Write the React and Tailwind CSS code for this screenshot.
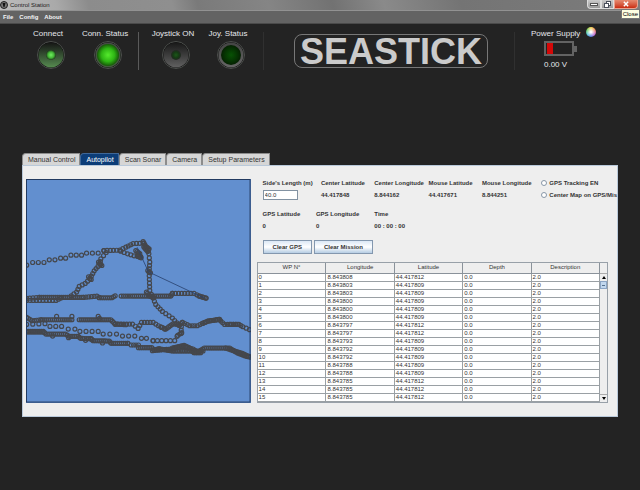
import React, { useState } from 'react';

const MENU = ['File', 'Config', 'About'];
const TABS = ['Manual Control', 'Autopilot', 'Scan Sonar', 'Camera', 'Setup Parameters'];
const COLUMNS = ['WP N°', 'Longitude', 'Latitude', 'Depth', 'Description'];

const WAYPOINTS = [
  ['8.843808', '44.417812'],
  ['8.843803', '44.417809'],
  ['8.843803', '44.417809'],
  ['8.843800', '44.417809'],
  ['8.843800', '44.417809'],
  ['8.843800', '44.417809'],
  ['8.843797', '44.417812'],
  ['8.843797', '44.417812'],
  ['8.843793', '44.417809'],
  ['8.843792', '44.417809'],
  ['8.843792', '44.417809'],
  ['8.843788', '44.417809'],
  ['8.843788', '44.417809'],
  ['8.843785', '44.417812'],
  ['8.843785', '44.417812'],
  ['8.843785', '44.417812'],
];

// step = distance between two fixes along the track
const TRACKS = [
  { step: 17, points: [[2, 259], [20, 251], [54, 251], [70, 243], [87, 243], [104, 238], [119, 238], [135, 229], [167, 229], [182, 223], [217, 223], [234, 215]] },
  { step: 9, points: [[234, 215], [282, 214], [300, 205], [322, 194], [352, 193], [368, 212]] },
  { step: 9, points: [[285, 217], [305, 225], [325, 231], [345, 233]] },
  { step: 5, points: [[352, 188], [360, 203], [370, 210], [366, 218], [354, 204]] },
  { step: 5, points: [[330, 215], [342, 224], [334, 231], [346, 237], [340, 230]] },
  { step: 10, points: [[241, 221], [225, 240], [222, 256], [205, 276], [192, 300], [178, 314], [160, 323], [152, 340], [136, 351]] },
  { step: 5, points: [[218, 250], [228, 260]] },
  { step: 5, points: [[188, 294], [196, 302]] },
  { step: 10, points: [[2, 365], [90, 365], [105, 358]] },
  { step: 9, points: [[2, 359], [40, 356]] },
  { step: 6, points: [[40, 356], [172, 356]] },
  { step: 9, points: [[172, 356], [213, 352], [220, 356]] },
  { step: 6, points: [[220, 357], [258, 357], [268, 351]] },
  { step: 7, points: [[286, 352], [320, 352]] },
  { step: 6, points: [[326, 352], [435, 352], [440, 344]] },
  { step: 10, points: [[440, 344], [505, 344], [522, 352], [541, 358]] },
  { step: 5, points: [[520, 352], [541, 358]] },
  { step: 11, points: [[368, 212], [372, 250], [370, 280], [372, 335], [382, 358], [390, 377], [410, 398], [440, 418], [460, 440]] },
  { step: 5, points: [[366, 275], [374, 282]] },
  { step: 6, points: [[362, 340], [372, 352], [384, 356]] },
  { step: 7, points: [[2, 416], [18, 426], [45, 423]] },
  { step: 6, points: [[45, 423], [138, 423]] },
  { step: 60, points: [[92, 413], [138, 413]] },
  { step: 6, points: [[160, 423], [255, 423], [268, 436]] },
  { step: 8, points: [[217, 413], [221, 419]] },
  { step: 9, points: [[268, 436], [320, 436], [337, 449], [347, 431], [382, 431], [398, 441], [417, 451]] },
  { step: 6, points: [[268, 436], [300, 438]] },
  { step: 5, points: [[405, 444], [420, 451], [442, 435], [462, 438], [470, 431]] },
  { step: 9, points: [[470, 431], [492, 441], [515, 441], [547, 427], [580, 422], [597, 437], [640, 437], [652, 444], [672, 453]] },
  { step: 6, points: [[530, 434], [547, 427], [582, 422]] },
  { step: 6, points: [[612, 437], [636, 437]] },
  { step: 17, points: [[2, 437], [57, 435], [72, 443], [107, 443], [127, 451], [147, 451], [162, 458], [217, 458], [232, 466], [272, 466], [290, 472], [327, 472], [347, 479], [362, 479], [382, 486]] },
  { step: 12, points: [[382, 486], [447, 486], [454, 473], [466, 464], [467, 444]] },
  { step: 6, points: [[456, 470], [468, 462]] },
  { step: 6, points: [[2, 458], [52, 458], [60, 466], [118, 466], [130, 473], [157, 473], [164, 479], [195, 480]] },
  { step: 7, points: [[2, 460], [50, 460]] },
  { step: 6, points: [[195, 480], [202, 486], [250, 487], [256, 494], [306, 494]] },
  { step: 60, points: [[80, 472], [128, 477], [230, 493]] },
  { step: 8, points: [[306, 494], [316, 499], [338, 499]] },
  { step: 6, points: [[338, 507], [378, 507], [386, 515], [440, 511], [468, 503], [502, 511], [516, 521], [536, 508], [612, 508], [636, 523], [662, 533], [674, 535]] },
  { step: 5, points: [[380, 516], [400, 510], [440, 517], [532, 517]] },
  { step: 5, points: [[440, 508], [475, 500], [490, 507], [505, 522], [525, 522]] },
  { step: 5, points: [[600, 508], [630, 518], [650, 524], [674, 535]] },
];

const fixesOf = ({ step, points }) => {
  const fixes = [];
  for (let i = 0; i < points.length - 1; i++) {
    const [x1, y1] = points[i];
    const [x2, y2] = points[i + 1];
    const n = Math.max(1, Math.round(Math.hypot(x2 - x1, y2 - y1) / step));
    for (let k = 0; k < n; k++) {
      fixes.push([x1 + ((x2 - x1) * k) / n, y1 + ((y2 - y1) * k) / n]);
    }
  }
  fixes.push(points[points.length - 1]);
  return fixes;
};

const MissionMap = () => (
  <svg viewBox="0 0 675 672" className="block w-full bg-[#628fcf]" role="img" aria-label="Mission map">
    <g fill="none" stroke="#45474c" strokeWidth="3.6">
      {TRACKS.flatMap(fixesOf).map(([x, y], i) => (
        <circle key={i} cx={x} cy={y} r="6" />
      ))}
    </g>
    <path d="M334 205L368 279L534 357" fill="none" stroke="#29426f" strokeWidth="2.5" />
    <rect x="1.5" y="1.5" width="672" height="669" fill="none" stroke="#223a60" strokeWidth="3" />
  </svg>
);

const Led = ({ label, id, ring, core, radius }) => (
  <button className="flex flex-col items-center gap-[1px] text-[8px] leading-[10px] text-gray-200 whitespace-nowrap">
    {label}
    <svg viewBox="0 0 30 30" className="w-[30px] h-[30px] ml-[5px]" aria-hidden="true">
      <defs>
        <linearGradient id={`${id}-ring`} x1="0" y1="0" x2="0" y2="1">
          <stop offset="0" stopColor={ring[0]} />
          <stop offset="1" stopColor={ring[1]} />
        </linearGradient>
        <radialGradient id={`${id}-core`}>
          <stop offset="0" stopColor={core[0]} />
          <stop offset="0.6" stopColor={core[1]} />
          <stop offset="1" stopColor={core[2]} />
        </radialGradient>
      </defs>
      <circle cx="15" cy="15" r="13.5" fill="#101010" stroke="#4c4f4c" strokeWidth="1" />
      <circle cx="15" cy="15" r="12.5" fill={`url(#${id}-ring)`} />
      <circle cx="15" cy="15" r={radius} fill={`url(#${id}-core)`} />
    </svg>
  </button>
);

const Field = ({ label, children }) => (
  <div className="flex flex-col gap-1 whitespace-nowrap">
    <span>{label}</span>
    <span>{children}</span>
  </div>
);

const ActionButton = ({ children }) => (
  <button className="h-[14px] px-[9px] border border-[#8397ae] bg-linear-to-b from-[#dce8f5] via-white to-[#b5cce3] font-bold">
    {children}
  </button>
);

const TitleBar = () => (
  <div className="relative flex justify-between h-[11px] bg-[linear-gradient(75deg,#bdbdbd_0%,#a9a9a9_9%,#8c8c8c_14%,#8f8f8f_27%,#7a7a7a_31%,#858585_42%,#727272_52%,#8a8a8a_60%,#747474_72%,#7c7c7c_100%)] border-b border-[#929292]">
    <div className="flex items-center gap-[2px] text-[6px] leading-[10px] text-[#222]">
      <svg viewBox="0 0 8 8" className="w-2 h-2" aria-hidden="true">
        <circle cx="4" cy="4" r="3.5" fill="#777" stroke="#222" />
        <path d="M2.5 2h3L4.5 6h-1z" fill="#111" />
      </svg>
      Control Station
    </div>
    <div className="flex h-[9px] mr-[2px]">
      <button aria-label="Minimize" className="flex items-center justify-center w-[14px] bg-linear-to-b from-[#ccc] to-[#999] border border-t-0 border-[#ddd] rounded-bl-sm">
        <span className="w-2 h-[3px] bg-white border border-[#555]" />
      </button>
      <button aria-label="Restore" className="flex items-center justify-center w-[13px] bg-linear-to-b from-[#ccc] to-[#999] border border-t-0 border-[#ddd]">
        <svg viewBox="0 0 7 7" className="w-[7px] h-[7px]" fill="#fff" stroke="#4a4f5c" aria-hidden="true">
          <rect x="2.5" y="0.5" width="4" height="4" />
          <rect x="0.5" y="2.5" width="4" height="4" />
        </svg>
      </button>
      <button aria-label="Close" className="flex items-center justify-center w-[24px] bg-linear-to-b from-[#e58a70] to-[#c9290c] border border-t-0 border-[#e9a28f] rounded-br-sm">
        <svg viewBox="0 0 7 7" className="w-[6px] h-[6px]" aria-hidden="true">
          <path d="M1 1l5 5M6 1l-5 5" stroke="#fff" strokeWidth="1.7" />
        </svg>
      </button>
    </div>
    <span role="tooltip" className="absolute right-0 top-[9px] z-10 px-[1px] border border-[#777] bg-[#ffffe1] text-[6px] leading-[8px] text-black">
      Close
    </span>
  </div>
);

const Header = () => (
  <header className="grid grid-cols-[20fr_56fr_58fr_5fr_68fr_42fr_14fr_252fr_125fr] items-start pt-[5px]">
    <span />
    <Led label="Connect" id="connect" ring={['#151515', '#568b50']} core={['#70f060', '#43b536', '#1d3a1a']} radius="5" />
    <Led label="Conn. Status" id="conn" ring={['#454b45', '#435e3d']} core={['#55ea2d', '#2eb514', '#165808']} radius="11" />
    <span className="justify-self-end w-[1px] h-[38px] mt-[3px] bg-[#5a5a5a]" />
    <Led label="Joystick ON" id="joystick" ring={['#181818', '#616161']} core={['#1c581a', '#153a14', '#242824']} radius="5" />
    <Led label="Joy. Status" id="joy" ring={['#444', '#666']} core={['#085205', '#053602', '#052002']} radius="10" />
    <span />
    <div className="flex justify-center pl-1 mt-[3px] h-[38px] border-x border-[#303030]">
      <h1 className="self-center h-[34px] px-[5px] border border-[#777] rounded-lg text-[36px] leading-[34px] font-bold text-[#cbcbcb]">
        SEASTICK
      </h1>
    </div>
    <div className="flex flex-col items-start pl-[16px] text-[8px] leading-[10px] text-gray-200">
      <div className="flex items-center gap-[6px] h-[9px] whitespace-nowrap">
        Power Supply
        <span className="w-[10px] h-[10px] -mt-1 rounded-full bg-[radial-gradient(circle,#fff_10%,transparent_70%),conic-gradient(#f3d34a,#ef8052,#c05ac8,#4d72e0,#4bc2cf,#64c94f,#f3d34a)]" />
      </div>
      <svg viewBox="0 0 33 16" className="w-[33px] h-4 mt-[3px] ml-[13px]" role="img" aria-label="Battery low">
        <rect x="1" y="1" width="28" height="13" fill="#222" stroke="#636363" strokeWidth="2" />
        <rect x="30" y="5" width="3" height="6" fill="#636363" />
        <rect x="3" y="2" width="6" height="11" fill="#d40808" />
      </svg>
      <span className="mt-[3px] ml-[13px]">0.00 V</span>
    </div>
  </header>
);

const WaypointTable = () => (
  <div className="flex mt-2 mr-[9px] h-[141px] overflow-hidden border border-[#98a0a8] font-normal text-[#333]">
    <div className="flex-1">
      <table className="w-full table-fixed border-collapse bg-white text-[6px] leading-[7px]">
        <thead>
          <tr className="h-[10px] bg-[#eee]">
            {COLUMNS.map((name) => (
              <th key={name} className="p-0 border-r border-b border-[#8a929a] font-normal">
                {name}
              </th>
            ))}
          </tr>
        </thead>
        <tbody>
          {WAYPOINTS.map(([lon, lat], i) => (
            <tr key={i} className="h-2">
              {[i, lon, lat, '0.0', '2.0'].map((value, c) => (
                <td key={c} className="p-0 pl-[1px] border-r border-b border-[#9aa0a4]">
                  {value}
                </td>
              ))}
            </tr>
          ))}
          <tr className="h-1">
            {COLUMNS.map((name) => (
              <td key={name} className="p-0 border-r border-[#9aa0a4]" />
            ))}
          </tr>
        </tbody>
      </table>
    </div>
    <div className="flex flex-col w-[7px] pt-[10px] bg-[#eee]">
      <button aria-label="Scroll up" className="flex items-center justify-center h-[8px] border-t border-[#aaa]">
        <svg viewBox="0 0 4 3" className="w-1 h-[3px]"><path d="M0 3L2 0L4 3z" /></svg>
      </button>
      <div className="flex items-center h-2 px-[1px] border border-[#8ba5c5] bg-[#c1d7ee]">
        <span className="w-full h-[1px] bg-[#55718f]" />
      </div>
      <button aria-label="Scroll down" className="flex items-center justify-center h-[8px] mt-auto border-t border-[#aaa]">
        <svg viewBox="0 0 4 3" className="w-1 h-[3px]"><path d="M0 0L2 3L4 0z" /></svg>
      </button>
    </div>
  </div>
);

const Autopilot = () => {
  const [side, setSide] = useState('40.0');

  return (
    <div className="flex-1 min-w-0 text-[6px] leading-[8px] font-bold text-[#333]">
      <div className="grid grid-cols-[58fr_53fr_54fr_53fr_59fr_75fr] pl-[6px]">
        <label className="flex flex-col gap-[3px] whitespace-nowrap">
          Side's Length (m)
          <input
            value={side}
            onChange={(e) => setSide(e.target.value)}
            className="w-[35px] h-[10px] px-[1px] border border-[#8292a2] bg-white font-normal"
          />
        </label>
        <Field label="Center Latitude">44.417848</Field>
        <Field label="Center Longitude">8.844162</Field>
        <Field label="Mouse Latitude">44.417671</Field>
        <Field label="Mouse Longitude">8.844251</Field>
        <div className="flex flex-col gap-1 whitespace-nowrap">
          {['GPS Tracking EN', 'Center Map on GPS/Mis'].map((label) => (
            <label key={label} className="flex items-center gap-[2px]">
              <input type="radio" name={label} className="appearance-none shrink-0 w-[6px] h-[6px] rounded-full border border-[#8797a8] bg-white checked:bg-[#3a6ea5]" />
              {label}
            </label>
          ))}
        </div>
      </div>
      <div className="grid grid-cols-[53fr_58fr_241fr] pl-[6px] mt-[10px]">
        <Field label="GPS Latitude">0</Field>
        <Field label="GPS Longitude">0</Field>
        <Field label="Time">00 : 00 : 00</Field>
      </div>
      <div className="flex gap-[2px] pl-[6px] mt-[10px]">
        <ActionButton>Clear GPS</ActionButton>
        <ActionButton>Clear Mission</ActionButton>
      </div>
      <WaypointTable />
    </div>
  );
};

const App = () => {
  const [tab, setTab] = useState('Autopilot');

  return (
    <div className="min-h-screen bg-[#232323] font-['Liberation_Sans',Arial,sans-serif]">
      <TitleBar />
      <nav className="flex gap-[6px] h-[13px] pl-[3px] bg-[#636363] border-b border-[#4a4a4a] text-[6px] leading-[13px] font-bold text-gray-100">
        {MENU.map((item) => (
          <button key={item}>{item}</button>
        ))}
      </nav>
      <Header />

      <main className="mx-[22px] mt-[83px]">
        {/* Tabs */}
        <div role="tablist" className="flex h-3">
          {TABS.map((name) => (
            <button
              key={name}
              role="tab"
              aria-selected={tab === name}
              onClick={() => setTab(name)}
              className={`pl-[5px] pr-[4px] border border-b-0 rounded-tl-sm text-[7px] leading-[11px] ${
                tab === name
                  ? 'bg-[#0c3d78] border-[#3f6797] text-white'
                  : 'bg-[#d6d6d6] border-[#8c8c8c] text-[#333]'
              }`}
            >
              {name}
            </button>
          ))}
        </div>

        {/* Panel */}
        <div className="flex gap-[6px] pl-[3px] pt-[13px] pb-[13px] bg-[#eee] border border-[#b9c9da]">
          <div className="w-[38%] shrink-0">
            <MissionMap />
          </div>
          <Autopilot />
        </div>
      </main>
    </div>
  );
};

export default App;
